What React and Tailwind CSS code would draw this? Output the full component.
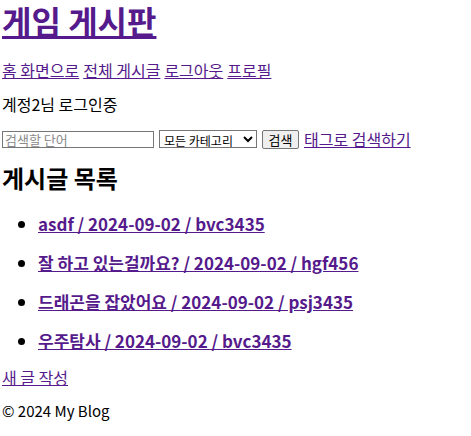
export default function App() {
  const posts = [
    'asdf / 2024-09-02 / bvc3435',
    '잘 하고 있는걸까요? / 2024-09-02 / hgf456',
    '드래곤을 잡았어요 / 2024-09-02 / psj3435',
    '우주탐사 / 2024-09-02 / bvc3435',
  ];

  return (
    <div className="min-h-screen bg-white pl-[2px] text-black font-['Noto_Sans_CJK_KR','Noto_Sans',sans-serif]">
      <h1 className="text-[32px] font-bold leading-[40px]">
        <a href="#" className="text-[#551a8b] underline">게임 게시판</a>
      </h1>

      <nav className="mt-[18px] flex gap-[4px] text-[16px] leading-[24px]">
        <a href="#" className="text-[#551a8b] underline">홈 화면으로</a>
        <a href="#" className="text-[#551a8b] underline">전체 게시글</a>
        <a href="#" className="text-[#551a8b] underline">로그아웃</a>
        <a href="#" className="text-[#551a8b] underline">프로필</a>
      </nav>

      <p className="mt-[10px] text-[16px] leading-[24px]">계정2님 로그인중</p>

      <form className="mt-[11px] flex h-6 items-center text-[13px]">
        <input
          type="text"
          placeholder="검색할 단어"
          className="h-[17px] w-[152px] border border-[#767676] px-[2px] text-[13px] leading-[15px] placeholder:text-[#8a8a8a]"
        />
        <select className="ml-[5px] h-[18px] w-[98px] border border-[#767676] py-0 text-[12px] leading-[16px]">
          <option>모든 카테고리</option>
        </select>
        <button
          type="button"
          className="ml-[5px] h-[19px] w-[37px] rounded-[2px] border border-[#767676] bg-[#efefef] text-[13px] leading-[17px]"
        >
          검색
        </button>
        <a href="#" className="ml-[5px] text-[16px] leading-[24px] text-[#551a8b] underline">태그로 검색하기</a>
      </form>

      <h2 className="mt-[11px] text-[24px] font-bold leading-[32px]">게시글 목록</h2>

      <ul className="mt-[18px] flex list-disc flex-col gap-[15px] pl-[36px]">
        {posts.map((p) => (
          <li key={p} className="text-[17px] font-bold leading-[24px]">
            <a href="#" className="text-[#551a8b] underline">{p}</a>
          </li>
        ))}
      </ul>

      <a href="#" className="mt-[12px] block w-fit text-[16px] leading-[24px] text-[#551a8b] underline">새 글 작성</a>

      <footer className="mt-[10px] text-[15px] leading-[24px]">© 2024 My Blog</footer>
    </div>
  );
}
